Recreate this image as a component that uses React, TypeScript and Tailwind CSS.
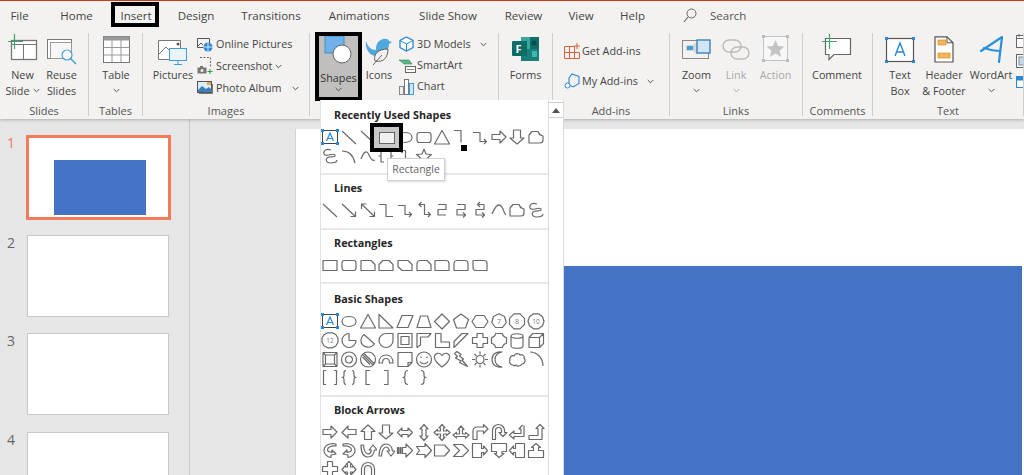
import React from "react";

const FONT = "font-['Open_Sans','Liberation_Sans',sans-serif]";
const S = "#6a6a6a";

/* ---------- ribbon primitives ---------- */
const Chev = ({ c = "#555" }: { c?: string }) => (
  <svg width="7" height="5" viewBox="0 0 7 5" className="shrink-0"><path d="M.7 1 3.5 3.8 6.3 1" fill="none" stroke={c} strokeWidth="1" /></svg>
);

function Big({ w, icon, l1, l2, chev, dim }: { w: string; icon: React.ReactNode; l1: string; l2?: string; chev?: boolean; dim?: boolean }) {
  return (
    <div className={`flex flex-col items-center shrink-0 ${w} ${dim ? "text-[#a8a8a8]" : ""}`}>
      <div className="h-[38px] flex items-start justify-center">{icon}</div>
      <div className="h-[15px] leading-[14px] whitespace-nowrap">{l1}</div>
      <div className="h-[15px] leading-[15px] flex items-center gap-[3px] whitespace-nowrap">
        {l2}
        {chev && <Chev c={dim ? "#aaa" : "#555"} />}
      </div>
    </div>
  );
}

function Small({ icon, label, chev }: { icon: React.ReactNode; label: string; chev?: React.ReactNode }) {
  return (
    <div className="flex items-center h-[22px] whitespace-nowrap">
      <div className="w-[19px] flex justify-start shrink-0">{icon}</div>
      <span>{label}</span>
      {chev}
    </div>
  );
}

function Group({ w, label, children, pad = "" }: { w: string; label?: string; children: React.ReactNode; pad?: string }) {
  return (
    <div className={`flex shrink-0 h-[89px] ${w}`}>
      <div className="flex-1 min-w-0 flex flex-col">
        <div className={`h-[74px] flex ${pad}`}>{children}</div>
        <div className="h-[15px] leading-[13px] text-center text-[11px] text-[#555]">{label}</div>
      </div>
      <div className="w-px my-[3px] bg-[#cfcdcb]" />
    </div>
  );
}

/* ---------- ribbon icons ---------- */
const INew = (
  <svg width="30" height="28" viewBox="0 0 30 28" className="mt-[4px]">
    <rect x="3.5" y="6.5" width="25" height="19" fill="#fff" stroke="#777" strokeWidth="1.3" />
    <path d="M3.5 10.5h25M15.5 10.5v15" stroke="#777" fill="none" />
    <path d="M6.5 0v15M0 7.5h15" stroke="#3ea76a" strokeWidth="1.2" />
  </svg>
);
const IReuse = (
  <svg width="30" height="28" viewBox="0 0 30 28" className="mt-[9px]">
    <rect x="0.5" y="0.5" width="24" height="19" fill="#fff" stroke="#777" />
    <rect x="3.5" y="3.5" width="21" height="16" fill="#f7f7f7" stroke="#999" />
    <circle cx="20" cy="16" r="5" fill="#fff" stroke="#3f9fd8" strokeWidth="1.2" />
    <path d="M23.5 19.5 29 25" stroke="#3f9fd8" strokeWidth="1.4" />
  </svg>
);
const ITable = (
  <svg width="27" height="27" viewBox="0 0 27 27" className="mt-[6px]">
    <rect x=".5" y=".5" width="26" height="26" fill="#fff" stroke="#777" />
    <rect x=".5" y=".5" width="26" height="4" fill="#999" />
    <path d="M.5 11.5h26M.5 19h26M9 4v22M18 4v22" stroke="#999" fill="none" />
  </svg>
);
const IPictures = (
  <svg width="30" height="30" viewBox="0 0 30 30" className="mt-[8px]">
    <path d="M.5 2.5h22v15H14v4H.5z" fill="#fff" stroke="#777" />
    <path d="M1 16 8 9l6 6" fill="none" stroke="#777" />
    <circle cx="20" cy="6" r="1.5" fill="#555" />
    <rect x="11.5" y="10.5" width="17" height="12" fill="#eaf4fb" stroke="#3f9fd8" />
    <path d="M20 23v3M16 26.5h8" stroke="#3f9fd8" />
  </svg>
);
const IOnline = (
  <svg width="16" height="15" viewBox="0 0 16 15">
    <path d="M.5 1.5h12v7" fill="none" stroke="#555" /><path d="M.5 1.5v9h6" fill="none" stroke="#555" />
    <path d="M1 9l3-3 2 2" fill="none" stroke="#555" />
    <circle cx="11" cy="10" r="4.5" fill="#2b88d8" />
    <path d="M6.5 10h9M11 5.5v9" stroke="#fff" strokeWidth=".8" />
  </svg>
);
const IScreenshot = (
  <svg width="16" height="18" viewBox="0 0 16 18">
    <path d="M3 .5h10.5v9" fill="none" stroke="#666" strokeDasharray="2 1.5" />
    <rect x=".5" y="10.5" width="9" height="6" fill="#777" /><rect x="3" y="9" width="3" height="2" fill="#777" />
    <circle cx="5" cy="13.5" r="1.5" fill="#eee" />
    <path d="M13 12v5M10.5 14.5h5" stroke="#2ea043" strokeWidth="1.1" />
  </svg>
);
const IAlbum = (
  <svg width="16" height="14" viewBox="0 0 16 14">
    <rect x=".5" y=".5" width="14" height="11" fill="#dcecf8" stroke="#555" />
    <path d="M1 9l4-4 4 3 3-2 3 3v2H1z" fill="#3f7fb8" />
    <rect x="10" y="1" width="4" height="3" fill="#e8a35a" />
    <path d="M2 12.5h13.5V3" fill="none" stroke="#777" />
  </svg>
);
const IShapes = (
  <svg width="37" height="30" viewBox="0 0 37 30">
    <rect x="5" y="0" width="19" height="17" fill="#6fb1e8" stroke="#3f8fd0" />
    <circle cx="22" cy="18" r="9" fill="#fff" stroke="#666" />
  </svg>
);
const IIcons = (
  <svg width="28" height="30" viewBox="0 0 28 30" className="mt-[6px]">
    <path d="M1 5c2 6 5 9 10 9 0-3 0-9 7-11 4-1 6 1 6 2l3 1-3 2c0 3-1 6-4 8-2 2-8 6-13 3C3 17 0 11 1 5z" fill="#4fa8e0" />
    <path d="M10 25c-2-7 3-12 13-12 0 8-4 14-13 12zM8 29l9-10" fill="#f3f2f1" stroke="#555" strokeWidth=".9" />
  </svg>
);
const I3D = (
  <svg width="15" height="16" viewBox="0 0 15 16">
    <path d="M7.5 1 14 4.5v7L7.5 15 1 11.5v-7z" fill="#fff" stroke="#2b88d8" strokeWidth="1.3" />
    <path d="M1 4.5 7.5 8 14 4.5M7.5 8v7" fill="none" stroke="#2b88d8" />
  </svg>
);
const ISmart = (
  <svg width="17" height="14" viewBox="0 0 17 14">
    <path d="M0 1h10l3 4H5z" fill="#5fb38a" stroke="#2e8b57" strokeWidth=".6" />
    <rect x="6.5" y="7.5" width="10" height="6" fill="#fff" stroke="#666" />
    <path d="M8 10.5h7" stroke="#888" />
  </svg>
);
const IChart = (
  <svg width="16" height="16" viewBox="0 0 16 16">
    <rect x=".5" y="7.5" width="4" height="8" fill="#eee" stroke="#888" />
    <rect x="5.5" y=".5" width="4" height="15" fill="#fff" stroke="#777" />
    <rect x="10.5" y="4.5" width="4" height="11" fill="#cfe6f7" stroke="#3f9fd8" />
  </svg>
);
const IForms = (
  <svg width="27" height="24" viewBox="0 0 27 24" className="mt-[7px]">
    <rect x="9" y="0" width="18" height="12" fill="#37a8a0" />
    <rect x="9" y="12" width="18" height="12" fill="#1a7f7a" />
    <rect x="18" y="0" width="9" height="12" fill="#0f6e6a" />
    <circle cx="22" cy="6" r="2.6" fill="#0a4f4c" />
    <rect x="20" y="14" width="5" height="6" fill="#3db8ae" />
    <rect x="0" y="4" width="15" height="15" rx="1" fill="#0e6b68" />
    <text x="3.6" y="15.5" fontSize="11" fontWeight="700" fill="#fff" fontFamily="Open Sans, sans-serif">F</text>
  </svg>
);
const IGetAdd = (
  <svg width="16" height="16" viewBox="0 0 16 16">
    <path d="M.5 3.5h10v12H.5zM.5 9.5h10M5.5 3.5v12M10.5 9.5h5v6h-5" fill="none" stroke="#d8623b" />
    <path d="M13 0v6M10 3h6" stroke="#d8623b" />
  </svg>
);
const IMyAdd = (
  <svg width="17" height="17" viewBox="0 0 17 17">
    <path d="M8 1l7 2.5v7L9 14 5 12V5z" fill="none" stroke="#2b88d8" strokeWidth="1.1" />
    <circle cx="3.5" cy="12.5" r="2.5" fill="#fff" stroke="#2b88d8" />
  </svg>
);
const IZoom = (
  <svg width="29" height="22" viewBox="0 0 29 22" className="mt-[8px]">
    <rect x=".5" y="2.5" width="26" height="18" fill="#f3f2f1" stroke="#888" />
    <path d="M4 7h7l5-4v14l-5-4H4z" fill="#d5d5d5" />
    <rect x="5" y="8" width="6" height="4" fill="#3f9fd8" />
    <rect x="15" y="2" width="13" height="13" fill="#cfe6f7" stroke="#3f7fb8" strokeWidth="1.4" />
  </svg>
);
const ILink = (
  <svg width="28" height="22" viewBox="0 0 28 22" className="mt-[9px]">
    <rect x="1" y="1" width="18" height="12" rx="6" fill="none" stroke="#bbb" strokeWidth="1.4" />
    <rect x="9" y="8" width="18" height="12" rx="6" fill="none" stroke="#bbb" strokeWidth="1.4" />
  </svg>
);
const IAction = (
  <svg width="27" height="27" viewBox="0 0 27 27" className="mt-[5px]">
    <rect x="1.5" y="1.5" width="24" height="24" fill="#f7f7f7" stroke="#c4c4c4" />
    <path d="M13.5 5l2.6 6 6.4.5-4.9 4.2 1.5 6.3-5.6-3.4-5.6 3.4 1.5-6.3-4.9-4.2 6.4-.5z" fill="#c4c4c4" />
    <path d="M0 0h3v3H0zM24 0h3v3h-3zM0 24h3v3H0zM24 24h3v3h-3z" fill="#bbb" />
  </svg>
);
const IComment = (
  <svg width="30" height="28" viewBox="0 0 30 28" className="mt-[4px]">
    <path d="M3.5 4.5h25v16H12l-5 5v-5H3.5z" fill="#fff" stroke="#666" strokeWidth="1.2" />
    <path d="M7.5 0v15M0 7.5h15" stroke="#3ea76a" strokeWidth="1.2" />
  </svg>
);
const ITextBox = (
  <svg width="30" height="26" viewBox="0 0 30 26" className="mt-[7px]">
    <rect x="1.5" y="1.5" width="27" height="23" fill="#fff" stroke="#555" strokeWidth="1.2" />
    <path d="M10 19l5-13 5 13M11.5 15h7" fill="none" stroke="#2b88d8" strokeWidth="1.4" />
    <path d="M0 0h3v3H0zM27 0h3v3h-3zM0 23h3v3H0zM27 23h3v3h-3z" fill="#2b88d8" />
  </svg>
);
const IHeader = (
  <svg width="20" height="27" viewBox="0 0 20 27" className="mt-[6px]">
    <path d="M1 .8h12l6 6V26H1z" fill="#fff" stroke="#555" strokeWidth="1.2" />
    <path d="M13 .8v6h6" fill="none" stroke="#555" />
    <rect x="4" y="4" width="8" height="5" fill="#f5b55a" stroke="#d68a20" strokeWidth=".7" />
    <rect x="4" y="17" width="12" height="5" fill="#f5b55a" stroke="#d68a20" strokeWidth=".7" />
  </svg>
);
const IWordArt = (
  <svg width="23" height="27" viewBox="0 0 23 27" className="mt-[6px]">
    <path d="M1 15 22 1l-3 25M4 12c6 2 11 3 16 3" fill="none" stroke="#2b8fdc" strokeWidth="2.2" strokeLinecap="round" strokeLinejoin="round" />
  </svg>
);

/* ---------- shape gallery glyphs: 18×18 ---------- */
const g = (d: string, extra?: React.ReactNode) => ({ d, extra });
const txt = (t: string) => (
  <text x="9" y="11.9" fontSize={t.length > 1 ? "6.5" : "7"} textAnchor="middle" fill="#777" fontFamily="Open Sans, sans-serif">{t}</text>
);

const SH: Record<string, { d: string; extra?: React.ReactNode }> = {
  line: g("M2 3 16 16"),
  rect: g("M2 4.5h14v10H2z"),
  oval: g("M16 9.5c0 3-3 5-7 5s-7-2-7-5 3-5 7-5 7 2 7 5z"),
  rrect: g("M4.5 4.5h9a2.5 2.5 0 0 1 2.5 2.5v5a2.5 2.5 0 0 1-2.5 2.5h-9A2.5 2.5 0 0 1 2 12V7a2.5 2.5 0 0 1 2.5-2.5z"),
  tri: g("M9 2.5 16.5 16h-15z"),
  elbow: g("M2 3.5h7v12h7"),
  elbowR: g("M2 2.5h7v12"),
  elbowA: g("M2 4.5h7v9h6.5M13 11l2.5 2.5L13 16"),
  elbowD: g("M4.5 3.5h5v10h6M13 11l2.5 2.5L13 16M6.5 1 4 3.5 6.5 6"),
  rarrow: g("M2 6.5h8V3l6 6-6 6v-3.5H2z"),
  darrow: g("M5.5 2h7v8H16l-7 6-7-6h3.5z"),
  free: g("M2 15V7l3-3.5h6c1 4 3 3.5 5 4.5v4c0 2-1 3-3 3z"),
  scrib: g("M10 3C5 1 2 4 3 7c2 4 9-2 11 1 1 3-6 1-8 3-2 2 0 5 3 5s7 0 7-3"),
  curve: g("M2 4c6 0 11 3 13 12"),
  s: g("M2 12c3-8 6-9 8-4s4 6 6 5"),
  brace2: g("M7 3H4v6H2h2v6h3M11 3h3v6h2-2v6h-3"),
  star: g("M9 2l2 5 5.500.500-4.200 3.500 1.400 5.500L9 13.500 4.300 16.500 5.700 11 1.500 7.500 7 7z"),
  lineA: g("M2 3 15.500 15.500M10.500 15.500h5v-5"),
  lineD: g("M2.500 3 15.500 15.500M2.500 8V3h5M10.500 15.500h5v-5"),
  curveZ: g("M5 3.500h8v5H5v5.500h8"),
  curveZA: g("M5 3.500h8v5H5v5.500h8M11 11.500l2.500 2.500-2.500 2.500"),
  curveZD: g("M7 3.500h6v5H5v5.500h8M11 11.500l2.500 2.500-2.500 2.500M9 1 6.500 3.500 9 6"),
  curveL: g("M2 13c3-7 6-11 9-8s3 8 5 9"),
  snip1: g("M2 4.500h10l4 4v6H2z"),
  snip2: g("M6 4.500h6l4 4v6H2v-6z"),
  snipD: g("M2 4.500h10l4 4v6H6l-4-4z"),
  snipR: g("M5 4.500h7l4 4v6H2V7.500a3 3 0 0 1 3-3z"),
  round1: g("M2 4.500h11a3 3 0 0 1 3 3v7H2z"),
  round2: g("M5 4.500h8a3 3 0 0 1 3 3v7H2v-7a3 3 0 0 1 3-3z"),
  roundD: g("M2 4.500h11a3 3 0 0 1 3 3v7H5a3 3 0 0 1-3-3z"),
  rtri: g("M2 2.500v13.500h14z"),
  para: g("M6 3.500h11L12 15.500H1z"),
  trap: g("M5.500 4h7l3.500 11.500H2z"),
  diam: g("M9 2l7.500 7.500L9 17 1.500 9.500z"),
  pent: g("M9 2l7.500 5.500-3 8.500h-9l-3-8.500z"),
  hex: g("M5 3.500h8l4 6-4 6H5l-4-6z"),
  hept: g("M9 1.800l5.500 2.700 1.800 6-3.800 5H5.500l-3.800-5 1.800-6z", txt("7")),
  oct: g("M6 1.800h6l4.500 4.500v6L12 16.800H6L1.500 12.300v-6z", txt("8")),
  dec: g("M6.500 1.800h5l4 3 1.500 4.500-1.500 4.500-4 3h-5l-4-3L1 9.300l1.500-4.500z", txt("10")),
  dod: g("M6.500 1.800h5l3.500 2 2 3.500v4l-2 3.500-3.500 2h-5l-3.500-2-2-3.500v-4l2-3.500z", txt("12")),
  pie: g("M9 2.500A7 7 0 1 0 16 9.500H9z"),
  chord: g("M5 3.500 15.500 13c-2 2.500-4.500 3.500-7 3.200C4 15.800 1.500 12.500 2 8.500 2.300 6.500 3.300 4.800 5 3.500z"),
  tear: g("M16 2.500H9a7 7 0 1 0 7 7z"),
  frame: g("M2 2.500h14v14H2zM5 5.500h8v8H5z"),
  half: g("M2 2.500h14L13 6H5.500v8L2 16.500z"),
  lsh: g("M2.500 2.500H8v8.500h8.500v5.500h-14z"),
  diag: g("M10 2.500h6L2 16.500v-6z"),
  cross: g("M6 2.500h6v4h4.500v6H12v4H6v-4H1.500v-6H6z"),
  plaque: g("M5.500 2.500h7c0 2 2 4 4 4v6c-2 0-4 2-4 4h-7c0-2-2-4-4-4v-6c2 0 4-2 4-4z"),
  can: g("M3 5c0-3 12-3 12 0v10c0 3-12 3-12 0zM3 5c0 3 12 3 12 0"),
  cube: g("M2 6.500h10.500v10H2zM2 6.500l4-4h10.500l-4 4M12.500 16.500l4-4v-10"),
  bevel: g("M2 2.500h14v14H2zM4.500 5h9v9h-9zM2 2.500 4.500 5M16 2.500 13.500 5M2 16.500 4.500 14M16 16.500 13.500 14"),
  donut: g("M16.500 9.500a7.500 7.500 0 1 1-15 0 7.500 7.500 0 0 1 15 0zM12.500 9.500a3.500 3.500 0 1 1-7 0 3.500 3.500 0 0 1 7 0z"),
  nosym: g("M16.500 9.500a7.500 7.500 0 1 1-15 0 7.500 7.500 0 0 1 15 0zM4 5l10 10M5 3.500l10 10M3.500 7 11 14.500"),
  barc: g("M2 13c0-5 3-8 7-8s7 3 7 8h-3.500c0-3-1.500-4.500-3.500-4.500S5.500 10 5.500 13z"),
  fold: g("M2 2.500h14v10l-4 4H2zM12 16.500v-4h4"),
  smile: g("M16.500 9.500a7.500 7.500 0 1 1-15 0 7.500 7.500 0 0 1 15 0zM6 6.500v1.500M12 6.500v1.500M5 11.500c2 3 6 3 8 0"),
  heart: g("M9 17C2 12 1 8.500 1.500 6 2.200 3 6.500 2 9 5.500 11.500 2 15.800 3 16.500 6c.5 2.500-.5 6-7.500 11z"),
  bolt: g("M5 1.500l4 3-1.500 1.500 4 3-1.500 1 5.500 6.500-8-4 1.500-1.500L3.500 8 5.500 6.500 2.500 3.500z"),
  sun: g("M13 9.500a4 4 0 1 1-8 0 4 4 0 0 1 8 0zM9 1.500v3M9 14.500v3M1 9.500h3M14 9.500h3M3.500 4l2 2M12.500 13l2 2M14.500 4l-2 2M5.500 13l-2 2"),
  moon: g("M12 2C7 3 5 6 5 9.500s2 6.500 7 7.500C6 18 2 14.500 2 9.500S6 1 12 2z"),
  cloud: g("M5 15c-3 0-4-3-3-5-1-3 2-5 4-4 1-3 5-3 6-1 2-1 5 1 4 3 2 2 1 6-2 6-1 2-5 3-6 1-1 1-2 1-3 0z"),
  arc: g("M3 2c7 0 13 6 13 14"),
  dbrk: g("M5 2.500H2.500v14H5M13 2.500h2.500v14H13"),
  dbrc: g("M6 2.500c-2 0-2 1-2 3v2c0 1-1 2-2 2 1 0 2 1 2 2v2c0 2 0 3 2 3M12 2.500c2 0 2 1 2 3v2c0 1 1 2 2 2-1 0-2 1-2 2v2c0 2 0 3-2 3"),
  lbrk: g("M11 2.500H7v14h4"),
  rbrk: g("M7 2.500h4v14H7"),
  lbrc: g("M12 2.500c-2 0-3 1-3 3v2c0 1-1 2-2 2 1 0 2 1 2 2v2c0 2 1 3 3 3"),
  rbrc: g("M6 2.500c2 0 3 1 3 3v2c0 1 1 2 2 2-1 0-2 1-2 2v2c0 2-1 3-3 3"),
  larrow: g("M16 6.500H8V3L2 9.500 8 15v-3.500h8z"),
  uarrow: g("M5.500 16.500v-8H2l7-6.500 7 6.500h-3.500v8z"),
  lrarrow: g("M1.500 9.500 6 5v2.500h6V5l4.500 4.500L12 14v-2.500H6V14z"),
  udarrow: g("M9 1.500 13 6h-2v7h2l-4 4.500L5 13h2V6H5z"),
  quad: g("M9 1.500 12 5h-1.500v3h3V6.500l3.500 3-3.500 3V11h-3v3H12l-3 3.500L6 14h1.500v-3h-3v1.500L1 9.500l3.500-3V8h3V5H6z"),
  lru: g("M9 3l3 3.500h-1.500V11h3V9.500L17 12l-3.500 3v-1.500h-9V15L1 12l3.500-2.500V11h3V6.500H6z"),
  bent: g("M2 16.500V8a4 4 0 0 1 4-4h6.500V1.500L17 6l-4.500 4.500V8H6v8.500z"),
  uturn: g("M2.500 16.500V7.500a6 6 0 0 1 12 0v2H17l-4 4-4-4h2.500v-2a3 3 0 0 0-6 0v9z"),
  lup: g("M16 2.500v11H6V16l-4.500-4L6 8v2.500h7V6h-2l3.500-4"),
  bup: g("M2 16.500v-4h9v-7H9L13 1.500l4 4h-2v11z"),
  crvR: g("M15 3C8 1.500 3 5 3 10c0 3 3 6 7 6.500V14l5-1-4-4v2.500C8 11 6.500 10 6.500 9 6.500 6 10 4.500 15 5z"),
  crvL: g("M3 3c7-1.500 12 2 12 7 0 3-3 6-7 6.500V14L3 13l4-4v2.500c3-.5 4.500-1.500 4.500-2.500C11.500 6 8 4.500 3 5z"),
  crvU: g("M2 4c0 8 3 12 7 12s6-3 6.500-7H18l-4-5-4 5h2.500c-.5 2-2 4-3.500 4S4.500 10 4.500 4z"),
  crvD: g("M2 15C2 7 5 3 9 3s6 3 6.500 7H18l-4 5-4-5h2.500C12 8 10.500 6 9 6s-4.500 3-4.500 9z"),
  strp: g("M1.500 6.500h1v6h-1zM4 6.500h1v6H4zM6.500 6.500H10V3l6.500 6.500L10 16v-3.500H6.500z"),
  notch: g("M1.500 5.500H10V2.500l6.500 7-6.500 7v-3H1.500l3-4z"),
  pgon: g("M1.500 4h10l5 5.500-5 5.500h-10z"),
  chevr: g("M1.500 3.500h9l6 6-6 6h-9l6-6z"),
  rcall: g("M1.500 2.500h9v5h2V5l4 4.500-4 4.500v-2.500h-2v5h-9z"),
  dcall: g("M1.500 2.500h15v8h-4.500v2h2L9 16.500 4.500 12.500h2v-2h-5z"),
  lcall: g("M7.500 2.500h9v14h-9v-5h-2V14l-4-4.500 4-4.500v2.500h2z"),
  ucall: g("M9 2.500l4.500 4h-2v3h5v7h-15v-7h5v-3h-2z"),
  lrcall: g("M6.500 1.500h5v5h5v5h-5v5h-5v-5h-5v-5h5z"),
  qcall: g("M9 1.500l3 3h-1.500v2.500h2V5.500l3.500 4-3.500 4v-1.500h-2v1.500H12l-3 3.500L6 14h1.500v-2h-2v1.500L2 9.500l3.500-4V7h2V4.500H6z"),
  arch: g("M2.500 17V9a6.500 6.500 0 0 1 13 0v8h-3V9a3.500 3.500 0 0 0-7 0v8z"),
};

const TB = (
  <svg width="18" height="18" viewBox="0 0 18 18">
    <rect x="1.500" y="2.500" width="15" height="13" fill="none" stroke="#444" />
    <path d="M5.500 13 9 5l3.500 8M6.800 10.500h4.400" fill="none" stroke="#2b88d8" strokeWidth="1.200" />
    <path d="M0 1h3v3H0zM15 1h3v3h-3zM0 14h3v3H0zM15 14h3v3h-3z" fill="#2b88d8" />
  </svg>
);

function Glyph({ n }: { n: string }) {
  if (n === "tb") return <div className="w-[18.7px] h-[18.6px] flex justify-center">{TB}</div>;
  const s = SH[n];
  return (
    <div className="w-[18.7px] h-[18.6px] flex justify-center">
      {s && (
        <svg width="18" height="18" viewBox="0 0 18 18">
          <path d={s.d} fill="none" stroke={S} strokeWidth="1.200" strokeLinejoin="round" />
          {s.extra}
        </svg>
      )}
    </div>
  );
}

function Section({ title, shapes, top, rule = true }: { title: string; shapes: string[]; top: string; rule?: boolean }) {
  return (
    <div className={rule ? "border-b-2 border-[#e8e8e8]" : ""}>
      <div className={`pl-[13px] text-[10.800px] leading-[14px] font-bold text-[#262626] ${top}`}>{title}</div>
      <div className="grid grid-cols-[repeat(12,18.7px)] pt-[6px] pb-[8px]">
        {shapes.map((n, i) => <Glyph key={i} n={n} />)}
      </div>
    </div>
  );
}

const TABS: { t: string; w: string }[] = [
  { t: "File", w: "w-[39px]" },
  { t: "Home", w: "w-[75px]" },
  { t: "Insert", w: "w-[44px]" },
  { t: "Design", w: "w-[76px]" },
  { t: "Transitions", w: "w-[74px]" },
  { t: "Animations", w: "w-[102px]" },
  { t: "Slide Show", w: "w-[76px]" },
  { t: "Review", w: "w-[75px]" },
  { t: "View", w: "w-[40px]" },
  { t: "Help", w: "w-[63px]" },
];

function Thumb({ n, cur, h }: { n: number; cur?: boolean; h: string }) {
  return (
    <div className={`flex ${h}`}>
      <div className={`w-[27px] pl-[7px] text-[14px] leading-[16px] ${cur ? "text-[#f0795a]" : "text-[#666]"}`}>{n}</div>
      {cur ? (
        <div className="w-[145px] h-[85px] -ml-[1.500px] border-[3px] border-[#f27b5c] bg-white pt-[22px] pl-[25px] shrink-0">
          <div className="w-[92px] h-[55px] bg-[#4472c4]" />
        </div>
      ) : (
        <div className="w-[142px] h-[82px] border border-[#c8c8c8] bg-white shrink-0" />
      )}
    </div>
  );
}

export default function App() {
  return (
    <div className={`relative w-[1024px] h-[475px] overflow-hidden bg-[#e6e6e6] text-[10.800px] text-[#444] ${FONT}`}>
      {/* ribbon */}
      <div className="relative z-10 h-[119px] bg-[#f3f2f1] border-t border-[#c43e1c] shadow-[0_1px_3px_rgba(0,0,0,0.25)]">
        <div className="flex h-[29px] items-center text-[11.500px]">
          {TABS.map((x) => (
            <div key={x.t} className={`relative text-center shrink-0 whitespace-nowrap ${x.w}`}>
              {x.t === "Insert" && <span className="absolute left-[-3px] right-[-1px] top-[-5px] h-[25px] border-[4px] border-black" />}
              {x.t}
            </div>
          ))}
          <div className="flex items-center ml-[19px] gap-[13px] text-[#555]">
            <svg width="14" height="15" viewBox="0 0 14 15"><circle cx="8.500" cy="5.500" r="4.500" fill="none" stroke="#666" /><path d="M5 9 1 14" stroke="#666" strokeWidth="1.200" /></svg>
            <span>Search</span>
          </div>
        </div>
        <div className="flex">
          <Group w="w-[89px]" label="Slides" pad="pl-[3px]">
            <Big w="w-[39px]" icon={INew} l1="New" l2="Slide" chev />
            <Big w="w-[39px]" icon={IReuse} l1="Reuse" l2="Slides" />
          </Group>
          <Group w="w-[54px]" label="Tables" pad="pl-[7px]">
            <Big w="w-[40px]" icon={ITable} l1="Table" chev />
          </Group>
          <Group w="w-[167px]" label="Images" pad="pl-[9px]">
            <Big w="w-[42px]" icon={IPictures} l1="Pictures" />
            <div className="flex flex-col pl-[3px] pt-[3px]">
              <Small icon={IOnline} label="Online Pictures" />
              <Small icon={IScreenshot} label="Screenshot" chev={<span className="ml-[3px]"><Chev /></span>} />
              <Small icon={IAlbum} label="Photo Album" chev={<span className="ml-[10px]"><Chev /></span>} />
            </div>
          </Group>
          <Group w="w-[189px]" pad="pl-[5px]">
            <div className="w-[47px] h-[69px] mt-[2px] -mb-[1px] border-[4px] border-black bg-[#c1bfbd] flex flex-col items-center shrink-0 text-[#333]">
              <div className="h-[31px]">{IShapes}</div>
              <div className="leading-[15px] mt-[3px] -mx-[3px] whitespace-nowrap">Shapes</div>
              <div className="mt-[2px]"><Chev /></div>
            </div>
            <Big w="w-[34px]" icon={IIcons} l1="Icons" />
            <div className="flex flex-col pl-[3px] pt-[3px]">
              <div className="flex items-center h-[22px] whitespace-nowrap"><div className="w-[18px]">{I3D}</div>3D Models<span className="ml-[9px]"><Chev /></span></div>
              <div className="flex items-center h-[21px] whitespace-nowrap"><div className="w-[18px]">{ISmart}</div>SmartArt</div>
              <div className="flex items-center h-[21px] whitespace-nowrap"><div className="w-[18px]">{IChart}</div>Chart</div>
            </div>
          </Group>
          <Group w="w-[54px]" pad="pl-[7px]">
            <Big w="w-[39px]" icon={IForms} l1="Forms" />
          </Group>
          <Group w="w-[117px]" label="Add-ins" pad="pl-[11px]">
            <div className="flex flex-col pt-[10px] gap-[8px]">
              <div className="flex items-center h-[22px] whitespace-nowrap"><div className="w-[18px]">{IGetAdd}</div>Get Add-ins</div>
              <div className="flex items-center h-[22px] whitespace-nowrap"><div className="w-[18px]">{IMyAdd}</div>My Add-ins<span className="ml-[9px]"><Chev /></span></div>
            </div>
          </Group>
          <Group w="w-[133px]" label="Links" pad="pl-[7px]">
            <Big w="w-[39px]" icon={IZoom} l1="Zoom" chev />
            <Big w="w-[40px]" icon={ILink} l1="Link" chev dim />
            <Big w="w-[39px]" icon={IAction} l1="Action" dim />
          </Group>
          <Group w="w-[70px]" label="Comments" pad="pl-[9px]">
            <Big w="w-[50px]" icon={IComment} l1="Comment" />
          </Group>
          <Group w="w-[151px]" label="Text" pad="pl-[9px]">
            <Big w="w-[36px]" icon={ITextBox} l1="Text" l2="Box" />
            <Big w="w-[52px]" icon={IHeader} l1="Header" l2="& Footer" />
            <Big w="w-[42px]" icon={IWordArt} l1="WordArt" chev />
            <div className="flex flex-col gap-[6px] pl-[4px] pt-[4px]">
              <svg width="14" height="14" viewBox="0 0 14 14"><rect x=".5" y="1.500" width="13" height="12" fill="#fff" stroke="#666" /><path d="M.5 4.500h13M3 0v3M10 0v3" stroke="#666" /></svg>
              <svg width="14" height="14" viewBox="0 0 14 14"><rect x=".5" y=".5" width="13" height="13" fill="#fff" stroke="#666" /><rect x="3" y="3" width="8" height="8" fill="#bcdcf3" stroke="#888" /></svg>
              <svg width="14" height="14" viewBox="0 0 14 14"><rect x=".5" y="2.500" width="13" height="11" fill="#fff" stroke="#2b88d8" /><path d="M.5 2.500h13v4H.5z" fill="#2b88d8" /></svg>
            </div>
          </Group>
        </div>
      </div>

      {/* body */}
      <div className="flex h-[356px]">
        <div className="w-[190px] shrink-0 border-r border-[#c8c8c8] pt-[16px] flex flex-col">
          <Thumb n={1} cur h="h-[100px] shrink-0" />
          <Thumb n={2} h="h-[98px] shrink-0" />
          <Thumb n={3} h="h-[99px] shrink-0" />
          <Thumb n={4} h="h-[98px] shrink-0" />
        </div>
        <div className="flex-1 min-w-0 pt-[10px] pl-[105px] overflow-hidden">
          <div className="w-[866px] h-[487px] bg-white border-l border-[#d4d4d4] pt-[137px] pl-[164px]">
            <div className="w-[562px] h-[312px] bg-[#4472c4]" />
          </div>
        </div>
      </div>

      {/* Shapes drop-down */}
      <div className="absolute z-20 left-[320px] top-[100px] w-[244px] h-[375px] bg-white flex border-l border-[#e2e2e2]">
        <div className="relative w-[227px] shrink-0">
          <Section title="Recently Used Shapes" top="pt-[8px]" shapes={["tb","line","line","rect","oval","rrect","tri","elbowR","elbowA","rarrow","darrow","free","scrib","curve","s","brace2","elbowD","star"]} />
          <Section title="Lines" top="pt-[6px]" shapes={["line","lineA","lineD","elbow","elbowA","elbowD","curveZ","curveZA","curveZD","curveL","free","scrib"]} />
          <Section title="Rectangles" top="pt-[6px]" shapes={["rect","rrect","snip1","snip2","snipD","snipR","round1","round2","roundD"]} />
          <Section title="Basic Shapes" top="pt-[8px]" shapes={["tb","oval","tri","rtri","para","trap","diam","pent","hex","hept","oct","dec","dod","pie","chord","tear","frame","half","lsh","diag","cross","plaque","can","cube","bevel","donut","nosym","barc","fold","smile","heart","bolt","sun","moon","cloud","arc","dbrk","dbrc","lbrk","rbrk","lbrc","rbrc"]} />
          <Section title="Block Arrows" top="pt-[6px]" rule={false} shapes={["rarrow","larrow","uarrow","darrow","lrarrow","udarrow","quad","lru","bent","uturn","lup","bup","crvR","crvL","crvU","crvD","strp","notch","pgon","chevr","rcall","dcall","lcall","ucall","lrcall","qcall","arch"]} />

          {/* highlighted Rectangle cell */}
          <div className="absolute left-[49px] top-[23px] w-[33px] h-[29px] border-[4px] border-black bg-[#c8c8c8] flex items-center justify-center">
            <div className="w-[16px] h-[12px] bg-[#f0f0f0] border border-[#666]" />
          </div>
          <div className="absolute left-[140px] top-[45px] w-[6px] h-[6px] bg-black" />
          <div className="absolute left-[66px] top-[58px] w-[58px] h-[23px] bg-white border border-[#d0d0d0] shadow-[1px_1px_2px_rgba(0,0,0,0.15)] flex items-center justify-center text-[10.500px] text-[#666]">Rectangle</div>
        </div>
        <div className="flex-1 border-l border-[#dcdcdc] bg-white pt-[2px] border-r">
          <div className="h-[16px] border-y border-[#cfcfcf] flex items-center justify-center">
            <svg width="8" height="5" viewBox="0 0 8 5"><path d="M4 0 8 5H0z" fill="#555" /></svg>
          </div>
        </div>
      </div>
    </div>
  );
}
